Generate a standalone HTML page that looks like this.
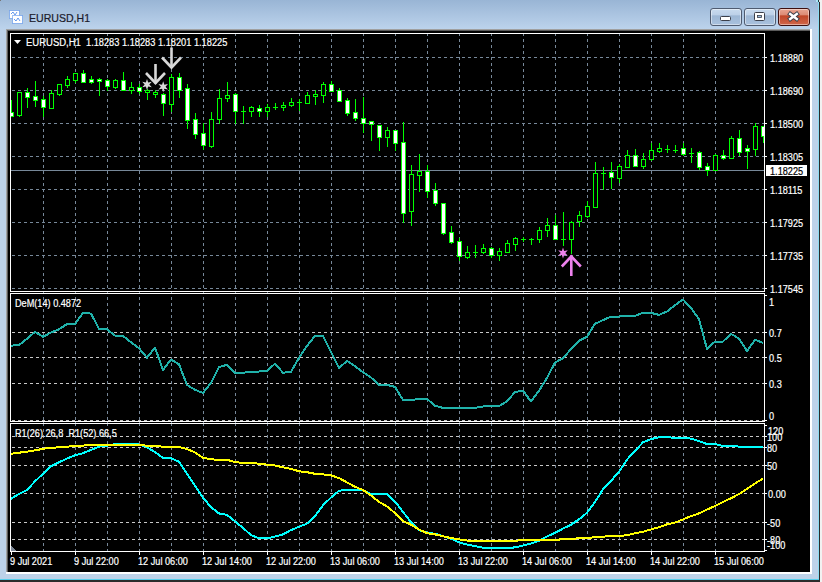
<!DOCTYPE html>
<html><head><meta charset="utf-8"><style>
html,body{margin:0;padding:0;width:822px;height:582px;overflow:hidden;background:#fff;}
body{position:relative;font-family:"Liberation Sans", sans-serif;}
.t{position:absolute;white-space:nowrap;line-height:14px;font-family:"Liberation Sans", sans-serif;transform:scaleX(0.915);transform-origin:0 0;-webkit-text-stroke:0.2px currentColor;}
#frame{position:absolute;left:0;top:0;width:819px;height:580px;background:#bdd2e9;}
#rb{position:absolute;left:819px;top:0;width:1px;height:581px;background:#2b2b2b;}
#rc{position:absolute;left:818px;top:2px;width:1px;height:578px;background:#8cdcf2;}
#bb{position:absolute;left:0;top:580px;width:820px;height:2px;background:#2b2b2b;}
#bc{position:absolute;left:0;top:579px;width:819px;height:1px;background:#56cdea;}
#title{position:absolute;left:0;top:0;width:818px;height:29px;background:linear-gradient(#99b5d5,#bcd3ec);}
#sunk{position:absolute;left:6px;top:29px;width:806px;height:545px;background:#fff;}
#sunk2{position:absolute;left:6px;top:29px;width:804px;height:543px;background:#a0a0a0;}
#sunk3{position:absolute;left:7px;top:30px;width:803px;height:542px;background:#5a5a5a;}
#chart{position:absolute;left:8px;top:31px;width:802px;height:541px;background:#000;}
.btn{position:absolute;top:8px;height:16px;border:1px solid #4f5b70;border-radius:3px;box-shadow:inset 0 0 0 1px rgba(255,255,255,0.45);}
.btn.b{background:linear-gradient(#c9dbef 0%,#bcd0e8 38%,#9db7d5 42%,#a9c1dd 100%);}
.btn.r{background:linear-gradient(#e9a592 0%,#dc8a74 38%,#c04628 42%,#d0664a 100%);border-color:#3d1010;}
</style></head><body>
<div id="frame"></div>
<div id="title"></div>
<div id="rc"></div><div id="rb"></div><div id="bc"></div><div id="bb"></div>
<div style="position:absolute;left:816px;top:0;width:2px;height:2px;background:#a8e4f4"></div><div style="position:absolute;left:818px;top:0;width:1px;height:2px;background:#1f3f48"></div><div style="position:absolute;left:819px;top:0;width:1px;height:2px;background:#e8e8e8"></div><div style="position:absolute;left:820px;top:0;width:2px;height:582px;background:#f2f2f2"></div><div style="position:absolute;left:0;top:0;width:1px;height:1px;background:#777"></div>
<div id="sunk"></div><div id="sunk2"></div><div id="sunk3"></div>
<div id="chart"></div>
<svg width="30" height="30" style="position:absolute;left:0;top:0">
 <rect x="9.5" y="10.5" width="10" height="8" fill="#fff" stroke="#3d7fe8" stroke-dasharray="1 1"/>
 <rect x="12.5" y="15.5" width="10" height="8" fill="#fff" stroke="#3d7fe8" stroke-dasharray="1 1"/>
 <polyline points="11,14 13,12 15,15 17,12" fill="none" stroke="#3d7fe8" stroke-width="0.8"/>
 <polyline points="14,19 16,21 18,18 20,21" fill="none" stroke="#3d7fe8" stroke-width="0.8"/>
</svg>
<div class="t" style="left:28.5px;top:11px;font-size:11px;line-height:14px;color:#1a1a2a;transform:scaleX(0.96)">EURUSD,H1</div>
<div class="btn b" style="left:710px;width:30px;"></div>
<div class="btn b" style="left:744px;width:30px;"></div>
<div class="btn r" style="left:778px;width:30px;"></div>
<svg width="822" height="30" style="position:absolute;left:0;top:0">
 <rect x="720.5" y="16.5" width="10" height="4" rx="1" fill="#fff" stroke="#3b3f4a"/>
 <rect x="754.5" y="12.5" width="10" height="8" rx="1" fill="#fff" stroke="#3b3f4a"/>
 <rect x="757.5" y="15.5" width="4" height="2" fill="#9ec0e0" stroke="#3b3f4a" stroke-width="0.8"/>
 <path d="M788.5 12.7 L798.5 20.3 M798.5 12.7 L788.5 20.3" stroke="#3b3f4a" stroke-width="4.4" stroke-linecap="butt"/>
 <path d="M789.2 13.2 L797.8 19.8 M797.8 13.2 L789.2 19.8" stroke="#fff" stroke-width="2.4" stroke-linecap="butt"/>
</svg>
<svg width="822" height="582" style="position:absolute;left:0;top:0" shape-rendering="crispEdges"><defs><clipPath id="cm"><rect x="11" y="34" width="753" height="257"/></clipPath><clipPath id="cd"><rect x="11" y="294" width="753" height="127"/></clipPath><clipPath id="cr"><rect x="11" y="424" width="753" height="127"/></clipPath></defs><line x1="43.5" y1="34" x2="43.5" y2="291" stroke="#778899" stroke-width="1" stroke-dasharray="3 3" stroke-dashoffset="1"/><line x1="43.5" y1="294" x2="43.5" y2="421" stroke="#778899" stroke-width="1" stroke-dasharray="3 3" stroke-dashoffset="3"/><line x1="43.5" y1="424" x2="43.5" y2="551" stroke="#778899" stroke-width="1" stroke-dasharray="3 3" stroke-dashoffset="1"/><rect x="43" y="292" width="1" height="1" fill="#778899"/><rect x="43" y="422" width="1" height="1" fill="#778899"/><line x1="75.5" y1="34" x2="75.5" y2="291" stroke="#778899" stroke-width="1" stroke-dasharray="3 3" stroke-dashoffset="1"/><line x1="75.5" y1="294" x2="75.5" y2="421" stroke="#778899" stroke-width="1" stroke-dasharray="3 3" stroke-dashoffset="3"/><line x1="75.5" y1="424" x2="75.5" y2="551" stroke="#778899" stroke-width="1" stroke-dasharray="3 3" stroke-dashoffset="1"/><rect x="75" y="292" width="1" height="1" fill="#778899"/><rect x="75" y="422" width="1" height="1" fill="#778899"/><line x1="107.5" y1="34" x2="107.5" y2="291" stroke="#778899" stroke-width="1" stroke-dasharray="3 3" stroke-dashoffset="1"/><line x1="107.5" y1="294" x2="107.5" y2="421" stroke="#778899" stroke-width="1" stroke-dasharray="3 3" stroke-dashoffset="3"/><line x1="107.5" y1="424" x2="107.5" y2="551" stroke="#778899" stroke-width="1" stroke-dasharray="3 3" stroke-dashoffset="1"/><rect x="107" y="292" width="1" height="1" fill="#778899"/><rect x="107" y="422" width="1" height="1" fill="#778899"/><line x1="139.5" y1="34" x2="139.5" y2="291" stroke="#778899" stroke-width="1" stroke-dasharray="3 3" stroke-dashoffset="1"/><line x1="139.5" y1="294" x2="139.5" y2="421" stroke="#778899" stroke-width="1" stroke-dasharray="3 3" stroke-dashoffset="3"/><line x1="139.5" y1="424" x2="139.5" y2="551" stroke="#778899" stroke-width="1" stroke-dasharray="3 3" stroke-dashoffset="1"/><rect x="139" y="292" width="1" height="1" fill="#778899"/><rect x="139" y="422" width="1" height="1" fill="#778899"/><line x1="171.5" y1="34" x2="171.5" y2="291" stroke="#778899" stroke-width="1" stroke-dasharray="3 3" stroke-dashoffset="1"/><line x1="171.5" y1="294" x2="171.5" y2="421" stroke="#778899" stroke-width="1" stroke-dasharray="3 3" stroke-dashoffset="3"/><line x1="171.5" y1="424" x2="171.5" y2="551" stroke="#778899" stroke-width="1" stroke-dasharray="3 3" stroke-dashoffset="1"/><rect x="171" y="292" width="1" height="1" fill="#778899"/><rect x="171" y="422" width="1" height="1" fill="#778899"/><line x1="203.5" y1="34" x2="203.5" y2="291" stroke="#778899" stroke-width="1" stroke-dasharray="3 3" stroke-dashoffset="1"/><line x1="203.5" y1="294" x2="203.5" y2="421" stroke="#778899" stroke-width="1" stroke-dasharray="3 3" stroke-dashoffset="3"/><line x1="203.5" y1="424" x2="203.5" y2="551" stroke="#778899" stroke-width="1" stroke-dasharray="3 3" stroke-dashoffset="1"/><rect x="203" y="292" width="1" height="1" fill="#778899"/><rect x="203" y="422" width="1" height="1" fill="#778899"/><line x1="235.5" y1="34" x2="235.5" y2="291" stroke="#778899" stroke-width="1" stroke-dasharray="3 3" stroke-dashoffset="1"/><line x1="235.5" y1="294" x2="235.5" y2="421" stroke="#778899" stroke-width="1" stroke-dasharray="3 3" stroke-dashoffset="3"/><line x1="235.5" y1="424" x2="235.5" y2="551" stroke="#778899" stroke-width="1" stroke-dasharray="3 3" stroke-dashoffset="1"/><rect x="235" y="292" width="1" height="1" fill="#778899"/><rect x="235" y="422" width="1" height="1" fill="#778899"/><line x1="267.5" y1="34" x2="267.5" y2="291" stroke="#778899" stroke-width="1" stroke-dasharray="3 3" stroke-dashoffset="1"/><line x1="267.5" y1="294" x2="267.5" y2="421" stroke="#778899" stroke-width="1" stroke-dasharray="3 3" stroke-dashoffset="3"/><line x1="267.5" y1="424" x2="267.5" y2="551" stroke="#778899" stroke-width="1" stroke-dasharray="3 3" stroke-dashoffset="1"/><rect x="267" y="292" width="1" height="1" fill="#778899"/><rect x="267" y="422" width="1" height="1" fill="#778899"/><line x1="299.5" y1="34" x2="299.5" y2="291" stroke="#778899" stroke-width="1" stroke-dasharray="3 3" stroke-dashoffset="1"/><line x1="299.5" y1="294" x2="299.5" y2="421" stroke="#778899" stroke-width="1" stroke-dasharray="3 3" stroke-dashoffset="3"/><line x1="299.5" y1="424" x2="299.5" y2="551" stroke="#778899" stroke-width="1" stroke-dasharray="3 3" stroke-dashoffset="1"/><rect x="299" y="292" width="1" height="1" fill="#778899"/><rect x="299" y="422" width="1" height="1" fill="#778899"/><line x1="331.5" y1="34" x2="331.5" y2="291" stroke="#778899" stroke-width="1" stroke-dasharray="3 3" stroke-dashoffset="1"/><line x1="331.5" y1="294" x2="331.5" y2="421" stroke="#778899" stroke-width="1" stroke-dasharray="3 3" stroke-dashoffset="3"/><line x1="331.5" y1="424" x2="331.5" y2="551" stroke="#778899" stroke-width="1" stroke-dasharray="3 3" stroke-dashoffset="1"/><rect x="331" y="292" width="1" height="1" fill="#778899"/><rect x="331" y="422" width="1" height="1" fill="#778899"/><line x1="363.5" y1="34" x2="363.5" y2="291" stroke="#778899" stroke-width="1" stroke-dasharray="3 3" stroke-dashoffset="1"/><line x1="363.5" y1="294" x2="363.5" y2="421" stroke="#778899" stroke-width="1" stroke-dasharray="3 3" stroke-dashoffset="3"/><line x1="363.5" y1="424" x2="363.5" y2="551" stroke="#778899" stroke-width="1" stroke-dasharray="3 3" stroke-dashoffset="1"/><rect x="363" y="292" width="1" height="1" fill="#778899"/><rect x="363" y="422" width="1" height="1" fill="#778899"/><line x1="395.5" y1="34" x2="395.5" y2="291" stroke="#778899" stroke-width="1" stroke-dasharray="3 3" stroke-dashoffset="1"/><line x1="395.5" y1="294" x2="395.5" y2="421" stroke="#778899" stroke-width="1" stroke-dasharray="3 3" stroke-dashoffset="3"/><line x1="395.5" y1="424" x2="395.5" y2="551" stroke="#778899" stroke-width="1" stroke-dasharray="3 3" stroke-dashoffset="1"/><rect x="395" y="292" width="1" height="1" fill="#778899"/><rect x="395" y="422" width="1" height="1" fill="#778899"/><line x1="427.5" y1="34" x2="427.5" y2="291" stroke="#778899" stroke-width="1" stroke-dasharray="3 3" stroke-dashoffset="1"/><line x1="427.5" y1="294" x2="427.5" y2="421" stroke="#778899" stroke-width="1" stroke-dasharray="3 3" stroke-dashoffset="3"/><line x1="427.5" y1="424" x2="427.5" y2="551" stroke="#778899" stroke-width="1" stroke-dasharray="3 3" stroke-dashoffset="1"/><rect x="427" y="292" width="1" height="1" fill="#778899"/><rect x="427" y="422" width="1" height="1" fill="#778899"/><line x1="459.5" y1="34" x2="459.5" y2="291" stroke="#778899" stroke-width="1" stroke-dasharray="3 3" stroke-dashoffset="1"/><line x1="459.5" y1="294" x2="459.5" y2="421" stroke="#778899" stroke-width="1" stroke-dasharray="3 3" stroke-dashoffset="3"/><line x1="459.5" y1="424" x2="459.5" y2="551" stroke="#778899" stroke-width="1" stroke-dasharray="3 3" stroke-dashoffset="1"/><rect x="459" y="292" width="1" height="1" fill="#778899"/><rect x="459" y="422" width="1" height="1" fill="#778899"/><line x1="491.5" y1="34" x2="491.5" y2="291" stroke="#778899" stroke-width="1" stroke-dasharray="3 3" stroke-dashoffset="1"/><line x1="491.5" y1="294" x2="491.5" y2="421" stroke="#778899" stroke-width="1" stroke-dasharray="3 3" stroke-dashoffset="3"/><line x1="491.5" y1="424" x2="491.5" y2="551" stroke="#778899" stroke-width="1" stroke-dasharray="3 3" stroke-dashoffset="1"/><rect x="491" y="292" width="1" height="1" fill="#778899"/><rect x="491" y="422" width="1" height="1" fill="#778899"/><line x1="523.5" y1="34" x2="523.5" y2="291" stroke="#778899" stroke-width="1" stroke-dasharray="3 3" stroke-dashoffset="1"/><line x1="523.5" y1="294" x2="523.5" y2="421" stroke="#778899" stroke-width="1" stroke-dasharray="3 3" stroke-dashoffset="3"/><line x1="523.5" y1="424" x2="523.5" y2="551" stroke="#778899" stroke-width="1" stroke-dasharray="3 3" stroke-dashoffset="1"/><rect x="523" y="292" width="1" height="1" fill="#778899"/><rect x="523" y="422" width="1" height="1" fill="#778899"/><line x1="555.5" y1="34" x2="555.5" y2="291" stroke="#778899" stroke-width="1" stroke-dasharray="3 3" stroke-dashoffset="1"/><line x1="555.5" y1="294" x2="555.5" y2="421" stroke="#778899" stroke-width="1" stroke-dasharray="3 3" stroke-dashoffset="3"/><line x1="555.5" y1="424" x2="555.5" y2="551" stroke="#778899" stroke-width="1" stroke-dasharray="3 3" stroke-dashoffset="1"/><rect x="555" y="292" width="1" height="1" fill="#778899"/><rect x="555" y="422" width="1" height="1" fill="#778899"/><line x1="587.5" y1="34" x2="587.5" y2="291" stroke="#778899" stroke-width="1" stroke-dasharray="3 3" stroke-dashoffset="1"/><line x1="587.5" y1="294" x2="587.5" y2="421" stroke="#778899" stroke-width="1" stroke-dasharray="3 3" stroke-dashoffset="3"/><line x1="587.5" y1="424" x2="587.5" y2="551" stroke="#778899" stroke-width="1" stroke-dasharray="3 3" stroke-dashoffset="1"/><rect x="587" y="292" width="1" height="1" fill="#778899"/><rect x="587" y="422" width="1" height="1" fill="#778899"/><line x1="619.5" y1="34" x2="619.5" y2="291" stroke="#778899" stroke-width="1" stroke-dasharray="3 3" stroke-dashoffset="1"/><line x1="619.5" y1="294" x2="619.5" y2="421" stroke="#778899" stroke-width="1" stroke-dasharray="3 3" stroke-dashoffset="3"/><line x1="619.5" y1="424" x2="619.5" y2="551" stroke="#778899" stroke-width="1" stroke-dasharray="3 3" stroke-dashoffset="1"/><rect x="619" y="292" width="1" height="1" fill="#778899"/><rect x="619" y="422" width="1" height="1" fill="#778899"/><line x1="651.5" y1="34" x2="651.5" y2="291" stroke="#778899" stroke-width="1" stroke-dasharray="3 3" stroke-dashoffset="1"/><line x1="651.5" y1="294" x2="651.5" y2="421" stroke="#778899" stroke-width="1" stroke-dasharray="3 3" stroke-dashoffset="3"/><line x1="651.5" y1="424" x2="651.5" y2="551" stroke="#778899" stroke-width="1" stroke-dasharray="3 3" stroke-dashoffset="1"/><rect x="651" y="292" width="1" height="1" fill="#778899"/><rect x="651" y="422" width="1" height="1" fill="#778899"/><line x1="683.5" y1="34" x2="683.5" y2="291" stroke="#778899" stroke-width="1" stroke-dasharray="3 3" stroke-dashoffset="1"/><line x1="683.5" y1="294" x2="683.5" y2="421" stroke="#778899" stroke-width="1" stroke-dasharray="3 3" stroke-dashoffset="3"/><line x1="683.5" y1="424" x2="683.5" y2="551" stroke="#778899" stroke-width="1" stroke-dasharray="3 3" stroke-dashoffset="1"/><rect x="683" y="292" width="1" height="1" fill="#778899"/><rect x="683" y="422" width="1" height="1" fill="#778899"/><line x1="715.5" y1="34" x2="715.5" y2="291" stroke="#778899" stroke-width="1" stroke-dasharray="3 3" stroke-dashoffset="1"/><line x1="715.5" y1="294" x2="715.5" y2="421" stroke="#778899" stroke-width="1" stroke-dasharray="3 3" stroke-dashoffset="3"/><line x1="715.5" y1="424" x2="715.5" y2="551" stroke="#778899" stroke-width="1" stroke-dasharray="3 3" stroke-dashoffset="1"/><rect x="715" y="292" width="1" height="1" fill="#778899"/><rect x="715" y="422" width="1" height="1" fill="#778899"/><line x1="11" y1="57.5" x2="764" y2="57.5" stroke="#778899" stroke-width="1" stroke-dasharray="3 3" stroke-dashoffset="5"/><line x1="11" y1="90.5" x2="764" y2="90.5" stroke="#778899" stroke-width="1" stroke-dasharray="3 3" stroke-dashoffset="5"/><line x1="11" y1="123.5" x2="764" y2="123.5" stroke="#778899" stroke-width="1" stroke-dasharray="3 3" stroke-dashoffset="5"/><line x1="11" y1="156.5" x2="764" y2="156.5" stroke="#778899" stroke-width="1" stroke-dasharray="3 3" stroke-dashoffset="5"/><line x1="11" y1="189.5" x2="764" y2="189.5" stroke="#778899" stroke-width="1" stroke-dasharray="3 3" stroke-dashoffset="5"/><line x1="11" y1="222.5" x2="764" y2="222.5" stroke="#778899" stroke-width="1" stroke-dasharray="3 3" stroke-dashoffset="5"/><line x1="11" y1="255.5" x2="764" y2="255.5" stroke="#778899" stroke-width="1" stroke-dasharray="3 3" stroke-dashoffset="5"/><line x1="11" y1="288.5" x2="764" y2="288.5" stroke="#778899" stroke-width="1" stroke-dasharray="3 3" stroke-dashoffset="5"/><line x1="11" y1="332.5" x2="764" y2="332.5" stroke="#c8c8c8" stroke-width="1" stroke-dasharray="3 3" stroke-dashoffset="5"/><line x1="11" y1="357.5" x2="764" y2="357.5" stroke="#c8c8c8" stroke-width="1" stroke-dasharray="3 3" stroke-dashoffset="5"/><line x1="11" y1="383.5" x2="764" y2="383.5" stroke="#c8c8c8" stroke-width="1" stroke-dasharray="3 3" stroke-dashoffset="5"/><line x1="11" y1="420.5" x2="764" y2="420.5" stroke="#c8c8c8" stroke-width="1" stroke-dasharray="3 3" stroke-dashoffset="5"/><line x1="11" y1="436.5" x2="764" y2="436.5" stroke="#c8c8c8" stroke-width="1" stroke-dasharray="3 3" stroke-dashoffset="5"/><line x1="11" y1="447.5" x2="764" y2="447.5" stroke="#c8c8c8" stroke-width="1" stroke-dasharray="3 3" stroke-dashoffset="5"/><line x1="11" y1="465.5" x2="764" y2="465.5" stroke="#c8c8c8" stroke-width="1" stroke-dasharray="3 3" stroke-dashoffset="5"/><line x1="11" y1="493.5" x2="764" y2="493.5" stroke="#c8c8c8" stroke-width="1" stroke-dasharray="3 3" stroke-dashoffset="5"/><line x1="11" y1="522.5" x2="764" y2="522.5" stroke="#c8c8c8" stroke-width="1" stroke-dasharray="3 3" stroke-dashoffset="5"/><line x1="11" y1="539.5" x2="764" y2="539.5" stroke="#c8c8c8" stroke-width="1" stroke-dasharray="3 3" stroke-dashoffset="5"/><rect x="11" y="170" width="753" height="1" fill="#778899"/><g clip-path="url(#cm)"><rect x="11" y="100" width="1" height="17" fill="#00ff00"/><rect x="9" y="112" width="5" height="5" fill="#00ff00"/><rect x="10" y="113" width="3" height="3" fill="#ffffff"/><rect x="19" y="92" width="1" height="25" fill="#00ff00"/><rect x="17" y="92" width="5" height="24" fill="#00ff00"/><rect x="18" y="93" width="3" height="22" fill="#000000"/><rect x="27" y="88" width="1" height="20" fill="#00ff00"/><rect x="25" y="92" width="5" height="6" fill="#00ff00"/><rect x="26" y="93" width="3" height="4" fill="#ffffff"/><rect x="35" y="81" width="1" height="26" fill="#00ff00"/><rect x="33" y="96" width="5" height="5" fill="#00ff00"/><rect x="34" y="97" width="3" height="3" fill="#ffffff"/><rect x="43" y="96" width="1" height="21" fill="#00ff00"/><rect x="41" y="99" width="5" height="9" fill="#00ff00"/><rect x="42" y="100" width="3" height="7" fill="#ffffff"/><rect x="51" y="90" width="1" height="19" fill="#00ff00"/><rect x="49" y="93" width="5" height="16" fill="#00ff00"/><rect x="50" y="94" width="3" height="14" fill="#000000"/><rect x="59" y="84" width="1" height="12" fill="#00ff00"/><rect x="57" y="84" width="5" height="11" fill="#00ff00"/><rect x="58" y="85" width="3" height="9" fill="#000000"/><rect x="67" y="76" width="1" height="12" fill="#00ff00"/><rect x="65" y="79" width="5" height="7" fill="#00ff00"/><rect x="66" y="80" width="3" height="5" fill="#000000"/><rect x="75" y="73" width="1" height="10" fill="#00ff00"/><rect x="73" y="73" width="5" height="8" fill="#00ff00"/><rect x="74" y="74" width="3" height="6" fill="#000000"/><rect x="83" y="70" width="1" height="13" fill="#00ff00"/><rect x="81" y="73" width="5" height="10" fill="#00ff00"/><rect x="82" y="74" width="3" height="8" fill="#ffffff"/><rect x="91" y="76" width="1" height="8" fill="#00ff00"/><rect x="89" y="79" width="5" height="4" fill="#00ff00"/><rect x="90" y="80" width="3" height="2" fill="#ffffff"/><rect x="99" y="78" width="1" height="18" fill="#00ff00"/><rect x="97" y="79" width="5" height="3" fill="#00ff00"/><rect x="98" y="80" width="3" height="1" fill="#ffffff"/><rect x="107" y="79" width="1" height="12" fill="#00ff00"/><rect x="105" y="80" width="5" height="7" fill="#00ff00"/><rect x="106" y="81" width="3" height="5" fill="#ffffff"/><rect x="115" y="79" width="1" height="10" fill="#00ff00"/><rect x="113" y="80" width="5" height="8" fill="#00ff00"/><rect x="114" y="81" width="3" height="6" fill="#000000"/><rect x="123" y="72" width="1" height="19" fill="#00ff00"/><rect x="121" y="80" width="5" height="11" fill="#00ff00"/><rect x="122" y="81" width="3" height="9" fill="#ffffff"/><rect x="131" y="82" width="1" height="12" fill="#00ff00"/><rect x="129" y="87" width="5" height="4" fill="#00ff00"/><rect x="130" y="88" width="3" height="2" fill="#000000"/><rect x="139" y="84" width="1" height="10" fill="#00ff00"/><rect x="137" y="87" width="5" height="5" fill="#00ff00"/><rect x="138" y="88" width="3" height="3" fill="#ffffff"/><rect x="147" y="89" width="1" height="11" fill="#00ff00"/><rect x="145" y="90" width="5" height="3" fill="#00ff00"/><rect x="146" y="91" width="3" height="1" fill="#000000"/><rect x="155" y="90" width="1" height="8" fill="#00ff00"/><rect x="153" y="92" width="5" height="3" fill="#00ff00"/><rect x="154" y="93" width="3" height="1" fill="#000000"/><rect x="163" y="93" width="1" height="23" fill="#00ff00"/><rect x="161" y="94" width="5" height="10" fill="#00ff00"/><rect x="162" y="95" width="3" height="8" fill="#ffffff"/><rect x="171" y="74" width="1" height="38" fill="#00ff00"/><rect x="169" y="77" width="5" height="28" fill="#00ff00"/><rect x="170" y="78" width="3" height="26" fill="#000000"/><rect x="179" y="73" width="1" height="25" fill="#00ff00"/><rect x="177" y="77" width="5" height="14" fill="#00ff00"/><rect x="178" y="78" width="3" height="12" fill="#ffffff"/><rect x="187" y="84" width="1" height="45" fill="#00ff00"/><rect x="185" y="88" width="5" height="33" fill="#00ff00"/><rect x="186" y="89" width="3" height="31" fill="#ffffff"/><rect x="195" y="113" width="1" height="26" fill="#00ff00"/><rect x="193" y="119" width="5" height="16" fill="#00ff00"/><rect x="194" y="120" width="3" height="14" fill="#ffffff"/><rect x="203" y="123" width="1" height="27" fill="#00ff00"/><rect x="201" y="133" width="5" height="13" fill="#00ff00"/><rect x="202" y="134" width="3" height="11" fill="#ffffff"/><rect x="211" y="112" width="1" height="36" fill="#00ff00"/><rect x="209" y="119" width="5" height="28" fill="#00ff00"/><rect x="210" y="120" width="3" height="26" fill="#000000"/><rect x="219" y="89" width="1" height="35" fill="#00ff00"/><rect x="217" y="98" width="5" height="22" fill="#00ff00"/><rect x="218" y="99" width="3" height="20" fill="#000000"/><rect x="227" y="82" width="1" height="20" fill="#00ff00"/><rect x="225" y="95" width="5" height="4" fill="#00ff00"/><rect x="226" y="96" width="3" height="2" fill="#000000"/><rect x="235" y="93" width="1" height="31" fill="#00ff00"/><rect x="233" y="94" width="5" height="18" fill="#00ff00"/><rect x="234" y="95" width="3" height="16" fill="#ffffff"/><rect x="243" y="106" width="1" height="18" fill="#00ff00"/><rect x="241" y="111" width="5" height="1" fill="#00ff00"/><rect x="251" y="106" width="1" height="11" fill="#00ff00"/><rect x="249" y="107" width="5" height="5" fill="#00ff00"/><rect x="250" y="108" width="3" height="3" fill="#000000"/><rect x="259" y="105" width="1" height="12" fill="#00ff00"/><rect x="257" y="108" width="5" height="4" fill="#00ff00"/><rect x="258" y="109" width="3" height="2" fill="#ffffff"/><rect x="267" y="104" width="1" height="13" fill="#00ff00"/><rect x="265" y="107" width="5" height="5" fill="#00ff00"/><rect x="266" y="108" width="3" height="3" fill="#000000"/><rect x="275" y="103" width="1" height="7" fill="#00ff00"/><rect x="273" y="107" width="5" height="1" fill="#00ff00"/><rect x="283" y="102" width="1" height="9" fill="#00ff00"/><rect x="281" y="105" width="5" height="3" fill="#00ff00"/><rect x="282" y="106" width="3" height="1" fill="#000000"/><rect x="291" y="98" width="1" height="9" fill="#00ff00"/><rect x="289" y="102" width="5" height="4" fill="#00ff00"/><rect x="290" y="103" width="3" height="2" fill="#000000"/><rect x="299" y="99" width="1" height="12" fill="#00ff00"/><rect x="297" y="102" width="5" height="1" fill="#00ff00"/><rect x="307" y="92" width="1" height="12" fill="#00ff00"/><rect x="305" y="95" width="5" height="9" fill="#00ff00"/><rect x="306" y="96" width="3" height="7" fill="#000000"/><rect x="315" y="90" width="1" height="15" fill="#00ff00"/><rect x="313" y="94" width="5" height="3" fill="#00ff00"/><rect x="314" y="95" width="3" height="1" fill="#000000"/><rect x="323" y="82" width="1" height="21" fill="#00ff00"/><rect x="321" y="84" width="5" height="12" fill="#00ff00"/><rect x="322" y="85" width="3" height="10" fill="#000000"/><rect x="331" y="81" width="1" height="11" fill="#00ff00"/><rect x="329" y="84" width="5" height="8" fill="#00ff00"/><rect x="330" y="85" width="3" height="6" fill="#ffffff"/><rect x="339" y="88" width="1" height="14" fill="#00ff00"/><rect x="337" y="90" width="5" height="12" fill="#00ff00"/><rect x="338" y="91" width="3" height="10" fill="#ffffff"/><rect x="347" y="98" width="1" height="18" fill="#00ff00"/><rect x="345" y="100" width="5" height="14" fill="#00ff00"/><rect x="346" y="101" width="3" height="12" fill="#ffffff"/><rect x="355" y="99" width="1" height="22" fill="#00ff00"/><rect x="353" y="112" width="5" height="7" fill="#00ff00"/><rect x="354" y="113" width="3" height="5" fill="#ffffff"/><rect x="363" y="97" width="1" height="36" fill="#00ff00"/><rect x="361" y="118" width="5" height="6" fill="#00ff00"/><rect x="362" y="119" width="3" height="4" fill="#ffffff"/><rect x="371" y="121" width="1" height="20" fill="#00ff00"/><rect x="369" y="121" width="5" height="4" fill="#00ff00"/><rect x="370" y="122" width="3" height="2" fill="#ffffff"/><rect x="379" y="125" width="1" height="26" fill="#00ff00"/><rect x="377" y="125" width="5" height="13" fill="#00ff00"/><rect x="378" y="126" width="3" height="11" fill="#ffffff"/><rect x="387" y="127" width="1" height="20" fill="#00ff00"/><rect x="385" y="130" width="5" height="8" fill="#00ff00"/><rect x="386" y="131" width="3" height="6" fill="#000000"/><rect x="395" y="130" width="1" height="21" fill="#00ff00"/><rect x="393" y="130" width="5" height="14" fill="#00ff00"/><rect x="394" y="131" width="3" height="12" fill="#ffffff"/><rect x="403" y="122" width="1" height="101" fill="#00ff00"/><rect x="401" y="142" width="5" height="72" fill="#00ff00"/><rect x="402" y="143" width="3" height="70" fill="#ffffff"/><rect x="411" y="165" width="1" height="61" fill="#00ff00"/><rect x="409" y="174" width="5" height="38" fill="#00ff00"/><rect x="410" y="175" width="3" height="36" fill="#000000"/><rect x="419" y="154" width="1" height="38" fill="#00ff00"/><rect x="417" y="171" width="5" height="5" fill="#00ff00"/><rect x="418" y="172" width="3" height="3" fill="#000000"/><rect x="427" y="165" width="1" height="33" fill="#00ff00"/><rect x="425" y="171" width="5" height="21" fill="#00ff00"/><rect x="426" y="172" width="3" height="19" fill="#ffffff"/><rect x="435" y="183" width="1" height="23" fill="#00ff00"/><rect x="433" y="190" width="5" height="14" fill="#00ff00"/><rect x="434" y="191" width="3" height="12" fill="#ffffff"/><rect x="443" y="203" width="1" height="32" fill="#00ff00"/><rect x="441" y="203" width="5" height="31" fill="#00ff00"/><rect x="442" y="204" width="3" height="29" fill="#ffffff"/><rect x="451" y="226" width="1" height="18" fill="#00ff00"/><rect x="449" y="232" width="5" height="11" fill="#00ff00"/><rect x="450" y="233" width="3" height="9" fill="#ffffff"/><rect x="459" y="238" width="1" height="23" fill="#00ff00"/><rect x="457" y="241" width="5" height="16" fill="#00ff00"/><rect x="458" y="242" width="3" height="14" fill="#ffffff"/><rect x="467" y="246" width="1" height="13" fill="#00ff00"/><rect x="465" y="252" width="5" height="6" fill="#00ff00"/><rect x="466" y="253" width="3" height="4" fill="#000000"/><rect x="475" y="245" width="1" height="13" fill="#00ff00"/><rect x="473" y="252" width="5" height="1" fill="#00ff00"/><rect x="483" y="244" width="1" height="10" fill="#00ff00"/><rect x="481" y="248" width="5" height="5" fill="#00ff00"/><rect x="482" y="249" width="3" height="3" fill="#000000"/><rect x="491" y="247" width="1" height="11" fill="#00ff00"/><rect x="489" y="248" width="5" height="8" fill="#00ff00"/><rect x="490" y="249" width="3" height="6" fill="#ffffff"/><rect x="499" y="248" width="1" height="13" fill="#00ff00"/><rect x="497" y="251" width="5" height="5" fill="#00ff00"/><rect x="498" y="252" width="3" height="3" fill="#000000"/><rect x="507" y="240" width="1" height="13" fill="#00ff00"/><rect x="505" y="243" width="5" height="10" fill="#00ff00"/><rect x="506" y="244" width="3" height="8" fill="#000000"/><rect x="515" y="237" width="1" height="14" fill="#00ff00"/><rect x="513" y="238" width="5" height="7" fill="#00ff00"/><rect x="514" y="239" width="3" height="5" fill="#000000"/><rect x="523" y="237" width="1" height="5" fill="#00ff00"/><rect x="521" y="239" width="5" height="1" fill="#00ff00"/><rect x="531" y="238" width="1" height="7" fill="#00ff00"/><rect x="529" y="239" width="5" height="1" fill="#00ff00"/><rect x="539" y="227" width="1" height="16" fill="#00ff00"/><rect x="537" y="230" width="5" height="10" fill="#00ff00"/><rect x="538" y="231" width="3" height="8" fill="#000000"/><rect x="547" y="218" width="1" height="19" fill="#00ff00"/><rect x="545" y="225" width="5" height="6" fill="#00ff00"/><rect x="546" y="226" width="3" height="4" fill="#000000"/><rect x="555" y="215" width="1" height="25" fill="#00ff00"/><rect x="553" y="225" width="5" height="15" fill="#00ff00"/><rect x="554" y="226" width="3" height="13" fill="#ffffff"/><rect x="563" y="212" width="1" height="34" fill="#00ff00"/><rect x="561" y="239" width="5" height="1" fill="#00ff00"/><rect x="571" y="221" width="1" height="33" fill="#00ff00"/><rect x="569" y="222" width="5" height="18" fill="#00ff00"/><rect x="570" y="223" width="3" height="16" fill="#000000"/><rect x="579" y="211" width="1" height="16" fill="#00ff00"/><rect x="577" y="215" width="5" height="7" fill="#00ff00"/><rect x="578" y="216" width="3" height="5" fill="#000000"/><rect x="587" y="201" width="1" height="17" fill="#00ff00"/><rect x="585" y="206" width="5" height="11" fill="#00ff00"/><rect x="586" y="207" width="3" height="9" fill="#000000"/><rect x="595" y="162" width="1" height="46" fill="#00ff00"/><rect x="593" y="173" width="5" height="35" fill="#00ff00"/><rect x="594" y="174" width="3" height="33" fill="#000000"/><rect x="603" y="167" width="1" height="23" fill="#00ff00"/><rect x="601" y="173" width="5" height="1" fill="#00ff00"/><rect x="611" y="162" width="1" height="27" fill="#00ff00"/><rect x="609" y="172" width="5" height="6" fill="#00ff00"/><rect x="610" y="173" width="3" height="4" fill="#ffffff"/><rect x="619" y="164" width="1" height="19" fill="#00ff00"/><rect x="617" y="166" width="5" height="13" fill="#00ff00"/><rect x="618" y="167" width="3" height="11" fill="#000000"/><rect x="627" y="150" width="1" height="18" fill="#00ff00"/><rect x="625" y="155" width="5" height="13" fill="#00ff00"/><rect x="626" y="156" width="3" height="11" fill="#000000"/><rect x="635" y="149" width="1" height="18" fill="#00ff00"/><rect x="633" y="155" width="5" height="12" fill="#00ff00"/><rect x="634" y="156" width="3" height="10" fill="#ffffff"/><rect x="643" y="153" width="1" height="16" fill="#00ff00"/><rect x="641" y="159" width="5" height="8" fill="#00ff00"/><rect x="642" y="160" width="3" height="6" fill="#000000"/><rect x="651" y="143" width="1" height="18" fill="#00ff00"/><rect x="649" y="150" width="5" height="10" fill="#00ff00"/><rect x="650" y="151" width="3" height="8" fill="#000000"/><rect x="659" y="143" width="1" height="10" fill="#00ff00"/><rect x="657" y="148" width="5" height="4" fill="#00ff00"/><rect x="658" y="149" width="3" height="2" fill="#000000"/><rect x="667" y="145" width="1" height="8" fill="#00ff00"/><rect x="665" y="149" width="5" height="1" fill="#00ff00"/><rect x="675" y="145" width="1" height="8" fill="#00ff00"/><rect x="673" y="150" width="5" height="1" fill="#00ff00"/><rect x="683" y="143" width="1" height="13" fill="#00ff00"/><rect x="681" y="148" width="5" height="7" fill="#00ff00"/><rect x="682" y="149" width="3" height="5" fill="#ffffff"/><rect x="691" y="148" width="1" height="15" fill="#00ff00"/><rect x="689" y="153" width="5" height="1" fill="#00ff00"/><rect x="699" y="151" width="1" height="19" fill="#00ff00"/><rect x="697" y="152" width="5" height="16" fill="#00ff00"/><rect x="698" y="153" width="3" height="14" fill="#ffffff"/><rect x="707" y="163" width="1" height="13" fill="#00ff00"/><rect x="705" y="166" width="5" height="5" fill="#00ff00"/><rect x="706" y="167" width="3" height="3" fill="#ffffff"/><rect x="715" y="154" width="1" height="17" fill="#00ff00"/><rect x="713" y="155" width="5" height="16" fill="#00ff00"/><rect x="714" y="156" width="3" height="14" fill="#000000"/><rect x="723" y="150" width="1" height="10" fill="#00ff00"/><rect x="721" y="155" width="5" height="4" fill="#00ff00"/><rect x="722" y="156" width="3" height="2" fill="#ffffff"/><rect x="731" y="136" width="1" height="23" fill="#00ff00"/><rect x="729" y="138" width="5" height="21" fill="#00ff00"/><rect x="730" y="139" width="3" height="19" fill="#000000"/><rect x="739" y="130" width="1" height="26" fill="#00ff00"/><rect x="737" y="138" width="5" height="15" fill="#00ff00"/><rect x="738" y="139" width="3" height="13" fill="#ffffff"/><rect x="747" y="145" width="1" height="24" fill="#00ff00"/><rect x="745" y="148" width="5" height="4" fill="#00ff00"/><rect x="746" y="149" width="3" height="2" fill="#ffffff"/><rect x="755" y="123" width="1" height="33" fill="#00ff00"/><rect x="753" y="126" width="5" height="24" fill="#00ff00"/><rect x="754" y="127" width="3" height="22" fill="#000000"/><rect x="763" y="126" width="1" height="17" fill="#00ff00"/><rect x="761" y="126" width="5" height="11" fill="#00ff00"/><rect x="762" y="127" width="3" height="9" fill="#ffffff"/></g><polyline clip-path="url(#cd)" points="11,345.7 19,345.0 27,338.8 35,331.8 43,336.9 51,332.5 59,329.3 67,324.0 75,324.0 83,312.9 91,313.6 99,328.7 107,329.3 115,335.5 123,335.9 131,342.2 139,348.2 147,357.7 155,347.6 163,370.0 171,359.5 179,364.3 187,385.0 195,389.8 203,393.0 211,382.8 219,367.1 227,364.8 235,372.8 243,372.8 251,371.8 259,371.5 267,370.9 275,363.7 283,372.8 291,371.8 299,357.7 307,345.9 315,335.9 323,335.9 331,352.0 339,368.0 347,360.9 355,366.2 363,372.2 371,377.5 379,385.0 387,384.9 395,386.9 403,400.0 411,400.0 419,398.9 427,398.9 435,405.7 443,407.9 451,407.9 459,407.9 467,407.9 475,407.9 483,406.5 491,406.0 499,406.0 507,401.4 515,392.0 523,390.8 531,401.5 539,390.8 547,378.0 555,362.5 563,358.2 571,349.1 579,340.9 587,336.7 595,323.7 603,320.2 611,316.5 619,316.5 627,315.7 635,315.8 643,312.9 651,312.9 659,314.9 667,311.5 675,305.1 683,299.5 691,308.0 699,319.2 707,348.9 715,341.5 723,341.5 731,333.8 739,338.6 747,351.0 755,339.8 763,342.9" fill="none" stroke="#20b2aa" stroke-width="2" stroke-linejoin="round" stroke-linecap="butt" shape-rendering="crispEdges"/><polyline clip-path="url(#cr)" points="11,498.7 19,493.9 27,490.0 35,481.3 43,473.8 51,466.2 59,462.3 67,458.6 75,455.3 83,453.2 91,449.9 99,446.7 107,445.6 115,444.1 123,444.1 131,444.1 139,444.5 147,447.3 155,452.1 163,457.9 171,458.2 179,461.8 187,473.8 195,485.7 203,497.6 211,507.3 219,513.4 227,514.9 235,521.4 243,527.9 251,535.1 259,538.3 267,538.3 275,536.6 283,534.4 291,530.1 299,526.8 307,523.6 315,516.0 323,505.2 331,497.6 339,490.7 347,489.8 355,489.8 363,489.8 371,494.4 379,494.4 387,493.6 395,501.6 403,511.9 411,522.2 419,530.1 427,532.6 435,533.8 443,536.2 451,538.7 459,542.3 467,544.5 475,546.0 483,547.7 491,548.0 499,548.0 507,548.0 515,547.4 523,545.6 531,543.6 539,540.8 547,536.5 555,532.8 563,528.6 571,524.7 579,519.3 587,512.8 595,501.9 603,489.4 611,480.9 619,471.6 627,459.6 635,451.0 643,442.3 651,439.1 659,437.3 667,436.9 675,438.0 683,438.0 691,438.6 699,441.2 707,444.0 715,444.0 723,446.0 731,446.0 739,446.6 747,446.6 755,446.6 763,446.6" fill="none" stroke="#00ffff" stroke-width="2" stroke-linejoin="round" stroke-linecap="butt" shape-rendering="crispEdges"/><polyline clip-path="url(#cr)" points="11,453.8 19,452.7 27,451.7 35,450.4 43,448.8 51,447.8 59,447.3 67,446.7 75,446.0 83,445.6 91,444.9 99,444.9 107,444.9 115,444.9 123,444.9 131,444.9 139,445.2 147,445.6 155,446.0 163,446.7 171,447.0 179,447.0 187,449.1 195,452.4 203,457.7 211,459.4 219,459.7 227,459.7 235,462.2 243,462.8 251,463.0 259,463.7 267,464.6 275,465.5 283,467.3 291,469.0 299,471.2 307,472.2 315,473.8 323,474.4 331,475.3 339,478.1 347,482.4 355,486.8 363,490.0 371,495.4 379,501.9 387,506.4 395,513.1 403,521.0 411,524.7 419,529.5 427,533.2 435,534.4 443,536.2 451,538.1 459,539.3 467,540.5 475,540.8 483,540.8 491,540.8 499,540.8 507,540.8 515,540.8 523,539.9 531,539.9 539,539.9 547,539.9 555,539.9 563,539.2 571,538.8 579,538.3 587,538.1 595,537.2 603,536.6 611,536.2 619,535.9 627,535.3 635,533.2 643,531.7 651,529.5 659,527.1 667,524.4 675,522.6 683,519.4 691,516.1 699,513.4 707,509.5 715,506.1 723,502.0 731,498.2 739,494.1 747,488.9 755,483.4 763,478.6" fill="none" stroke="#ffff00" stroke-width="2" stroke-linejoin="round" stroke-linecap="butt" shape-rendering="crispEdges"/><g fill="none" stroke="#d8d8d8" stroke-width="2.6" shape-rendering="geometricPrecision"><line x1="155.5" y1="64" x2="155.5" y2="83.5"/><polyline points="146.0,73.0 155.5,83.0 165.0,73.0" stroke-linejoin="miter"/></g><g fill="none" stroke="#d8d8d8" stroke-width="2.6" shape-rendering="geometricPrecision"><line x1="171.5" y1="47.5" x2="171.5" y2="68"/><polyline points="162.0,57.5 171.5,67.5 181.0,57.5" stroke-linejoin="miter"/></g><polygon points="147.00,79.00 145.84,82.50 142.24,81.75 144.69,84.50 142.24,87.25 145.84,86.50 147.00,90.00 148.16,86.50 151.76,87.25 149.31,84.50 151.76,81.75 148.16,82.50" fill="#d8d8d8" shape-rendering="geometricPrecision"/><polygon points="163.20,81.20 162.04,84.70 158.44,83.95 160.89,86.70 158.44,89.45 162.04,88.70 163.20,92.20 164.35,88.70 167.96,89.45 165.51,86.70 167.96,83.95 164.35,84.70" fill="#d8d8d8" shape-rendering="geometricPrecision"/><g fill="none" stroke="#ee82ee" stroke-width="2.6" shape-rendering="geometricPrecision"><line x1="571.3" y1="256" x2="571.3" y2="276"/><polyline points="561.8,266.5 571.3,256.5 580.8,266.5" stroke-linejoin="miter"/></g><polygon points="563.00,247.50 561.85,251.00 558.24,250.25 560.69,253.00 558.24,255.75 561.85,255.00 563.00,258.50 564.15,255.00 567.76,255.75 565.31,253.00 567.76,250.25 564.15,251.00" fill="#ee82ee" shape-rendering="geometricPrecision"/><rect x="10.5" y="33.5" width="754" height="257.5" fill="none" stroke="#ffffff" stroke-width="1"/><rect x="10.5" y="293.5" width="754" height="127.5" fill="none" stroke="#ffffff" stroke-width="1"/><rect x="10.5" y="423.5" width="754" height="127.5" fill="none" stroke="#ffffff" stroke-width="1"/><rect x="765" y="57" width="2" height="1" fill="#ffffff"/><rect x="765" y="90" width="2" height="1" fill="#ffffff"/><rect x="765" y="123" width="2" height="1" fill="#ffffff"/><rect x="765" y="156" width="2" height="1" fill="#ffffff"/><rect x="765" y="189" width="2" height="1" fill="#ffffff"/><rect x="765" y="222" width="2" height="1" fill="#ffffff"/><rect x="765" y="255" width="2" height="1" fill="#ffffff"/><rect x="765" y="288" width="2" height="1" fill="#ffffff"/><rect x="765" y="295" width="2" height="1" fill="#ffffff"/><rect x="765" y="332" width="2" height="1" fill="#ffffff"/><rect x="765" y="357" width="2" height="1" fill="#ffffff"/><rect x="765" y="383" width="2" height="1" fill="#ffffff"/><rect x="765" y="420" width="2" height="1" fill="#ffffff"/><rect x="765" y="425" width="2" height="1" fill="#ffffff"/><rect x="765" y="436" width="2" height="1" fill="#ffffff"/><rect x="765" y="447" width="2" height="1" fill="#ffffff"/><rect x="765" y="465" width="2" height="1" fill="#ffffff"/><rect x="765" y="493" width="2" height="1" fill="#ffffff"/><rect x="765" y="522" width="2" height="1" fill="#ffffff"/><rect x="765" y="539" width="2" height="1" fill="#ffffff"/><rect x="765" y="550" width="2" height="1" fill="#ffffff"/><rect x="11" y="552" width="1" height="3" fill="#ffffff"/><rect x="75" y="552" width="1" height="3" fill="#ffffff"/><rect x="139" y="552" width="1" height="3" fill="#ffffff"/><rect x="203" y="552" width="1" height="3" fill="#ffffff"/><rect x="267" y="552" width="1" height="3" fill="#ffffff"/><rect x="331" y="552" width="1" height="3" fill="#ffffff"/><rect x="395" y="552" width="1" height="3" fill="#ffffff"/><rect x="459" y="552" width="1" height="3" fill="#ffffff"/><rect x="523" y="552" width="1" height="3" fill="#ffffff"/><rect x="587" y="552" width="1" height="3" fill="#ffffff"/><rect x="651" y="552" width="1" height="3" fill="#ffffff"/><rect x="715" y="552" width="1" height="3" fill="#ffffff"/><polygon points="14,40 21,40 17.5,44" fill="#fff" shape-rendering="geometricPrecision"/><polygon points="11,546 11,551 16,551" fill="#7c8796"/></svg>
<div class="t" style="left:770px;top:52px;font-size:10px;color:#fff;">1.18880</div><div class="t" style="left:770px;top:85px;font-size:10px;color:#fff;">1.18690</div><div class="t" style="left:770px;top:118px;font-size:10px;color:#fff;">1.18500</div><div class="t" style="left:770px;top:151px;font-size:10px;color:#fff;">1.18305</div><div class="t" style="left:770px;top:184px;font-size:10px;color:#fff;">1.18115</div><div class="t" style="left:770px;top:217px;font-size:10px;color:#fff;">1.17925</div><div class="t" style="left:770px;top:250px;font-size:10px;color:#fff;">1.17735</div><div class="t" style="left:770px;top:283px;font-size:10px;color:#fff;">1.17545</div><div class="t" style="left:769px;top:296px;font-size:10px;color:#fff;">1</div><div class="t" style="left:769px;top:327px;font-size:10px;color:#fff;">0.7</div><div class="t" style="left:769px;top:352px;font-size:10px;color:#fff;">0.5</div><div class="t" style="left:769px;top:378px;font-size:10px;color:#fff;">0.3</div><div class="t" style="left:769px;top:410px;font-size:10px;color:#fff;">0</div><div class="t" style="left:768px;top:425px;font-size:10px;color:#fff;">120</div><div class="t" style="left:767px;top:431px;font-size:10px;color:#fff;">100</div><div class="t" style="left:767px;top:442px;font-size:10px;color:#fff;">80</div><div class="t" style="left:767px;top:460px;font-size:10px;color:#fff;">50</div><div class="t" style="left:768px;top:488px;font-size:10px;color:#fff;">0.00</div><div class="t" style="left:767px;top:517px;font-size:10px;color:#fff;">-50</div><div class="t" style="left:767px;top:534px;font-size:10px;color:#fff;">-80</div><div class="t" style="left:767px;top:539px;font-size:10px;color:#fff;">-100</div><div class="t" style="left:10px;top:555px;font-size:10px;color:#fff;">9 Jul 2021</div><div class="t" style="left:74px;top:555px;font-size:10px;color:#fff;">9 Jul 22:00</div><div class="t" style="left:138px;top:555px;font-size:10px;color:#fff;">12 Jul 06:00</div><div class="t" style="left:202px;top:555px;font-size:10px;color:#fff;">12 Jul 14:00</div><div class="t" style="left:266px;top:555px;font-size:10px;color:#fff;">12 Jul 22:00</div><div class="t" style="left:330px;top:555px;font-size:10px;color:#fff;">13 Jul 06:00</div><div class="t" style="left:394px;top:555px;font-size:10px;color:#fff;">13 Jul 14:00</div><div class="t" style="left:458px;top:555px;font-size:10px;color:#fff;">13 Jul 22:00</div><div class="t" style="left:522px;top:555px;font-size:10px;color:#fff;">14 Jul 06:00</div><div class="t" style="left:586px;top:555px;font-size:10px;color:#fff;">14 Jul 14:00</div><div class="t" style="left:650px;top:555px;font-size:10px;color:#fff;">14 Jul 22:00</div><div class="t" style="left:714px;top:555px;font-size:10px;color:#fff;">15 Jul 06:00</div><div class="t" style="left:26px;top:36px;font-size:10px;color:#fff;transform:scaleX(0.95)">EURUSD,H1</div><div class="t" style="left:85.5px;top:36px;font-size:10px;color:#fff;transform:scaleX(0.924)">1.18283 1.18283 1.18201 1.18225</div><div class="t" style="left:15px;top:297px;font-size:10px;color:#fff;">DeM(14) 0.4872</div><div class="t" style="left:15px;top:427px;font-size:10px;color:#fff;">R1(26) 26,8&nbsp;&nbsp;R1(52) 66,5</div>
<div style="position:absolute;left:766px;top:165px;width:41px;height:11px;background:#fff;"></div>
<div class="t" style="left:770px;top:165px;font-size:10px;color:#000;">1.18225</div>
</body></html>
